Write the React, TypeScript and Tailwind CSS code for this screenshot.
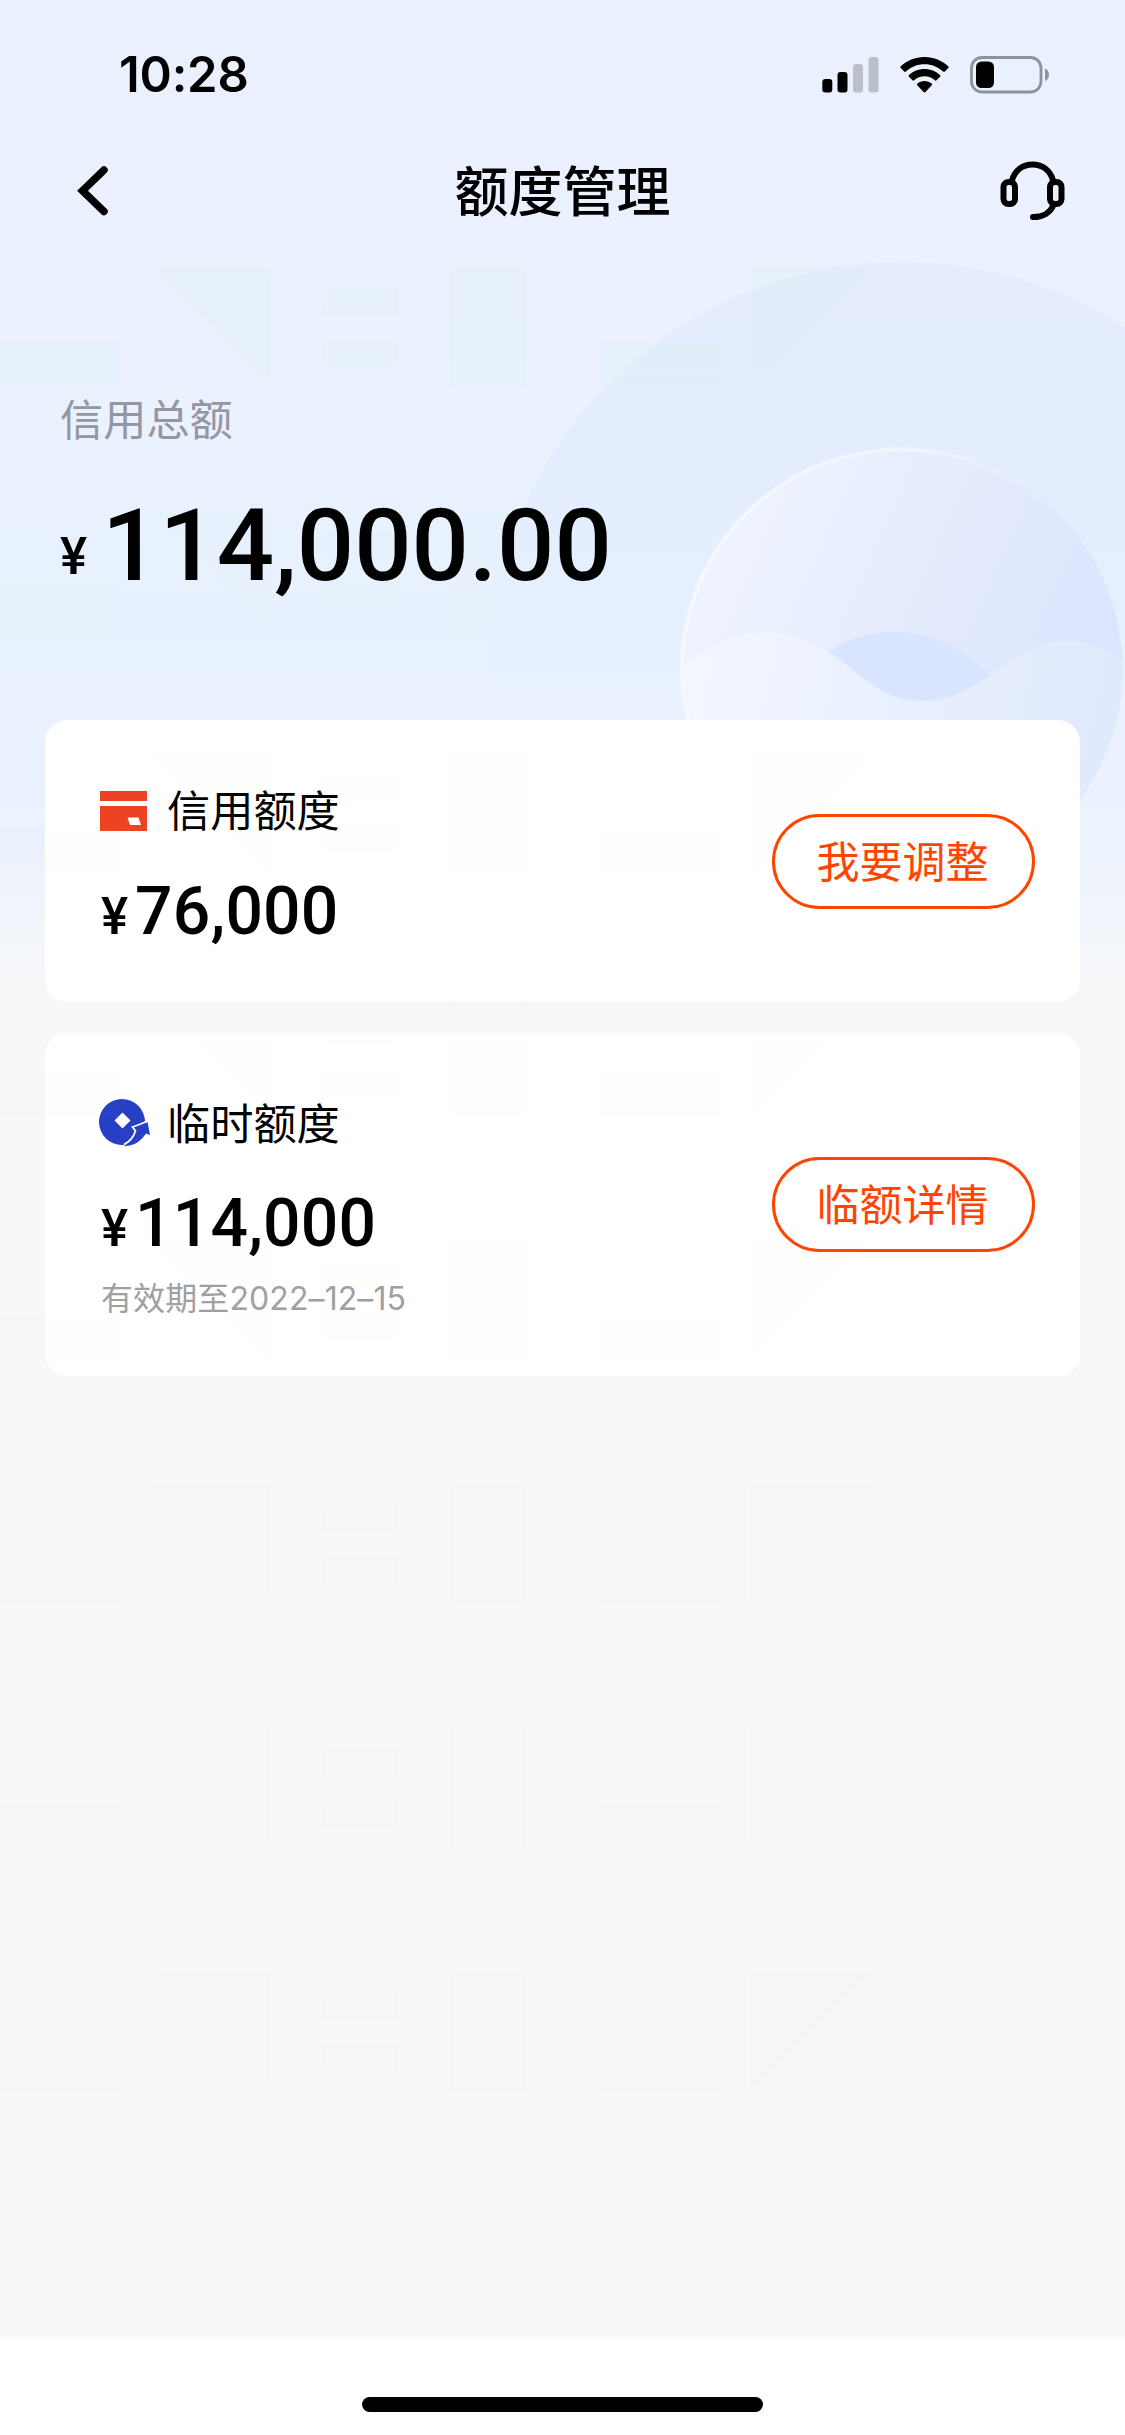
const watermarkShape =
  "M0 76H120V120H0ZM152 0H271V120ZM323 21H398V48H323ZM323 73H398V100H323ZM450 0H526V120H450ZM600 76H720V120H600ZM751 0H871L751 120Z";

const skyRows = [
  { y: 266, opacity: 0.22 },
  { y: 509.5, opacity: 0.12 },
];

const pageRows = [
  { y: 753, opacity: 0.015 },
  { y: 997, opacity: 0.015 },
  { y: 1240.5, opacity: 0.015 },
  { y: 1484, opacity: 0.022 },
  { y: 1728, opacity: 0.022 },
  { y: 1971.5, opacity: 0.022 },
];

const cjk = "font-['Noto_Sans_CJK_SC',sans-serif]";

function Backdrop() {
  return (
    <svg className="absolute inset-0" width="1125" height="1100" viewBox="0 0 1125 1100" fill="none">
      <defs>
        <linearGradient id="halo" x1="0" y1="262" x2="0" y2="720" gradientUnits="userSpaceOnUse">
          <stop offset="0" stopColor="#e4ecfd" />
          <stop offset="0.5" stopColor="#e3edfe" />
          <stop offset="0.78" stopColor="#e4effe" stopOpacity="0.5" />
          <stop offset="1" stopColor="#e8f1ff" stopOpacity="0" />
        </linearGradient>
        <linearGradient id="orb" x1="730" y1="520" x2="1115" y2="690" gradientUnits="userSpaceOnUse">
          <stop offset="0" stopColor="#eff3ff" />
          <stop offset="0.5" stopColor="#e5ebfd" />
          <stop offset="1" stopColor="#d9e5fd" />
        </linearGradient>
        <linearGradient id="rim" x1="700" y1="560" x2="1060" y2="600" gradientUnits="userSpaceOnUse">
          <stop offset="0" stopColor="#f5f8ff" />
          <stop offset="0.6" stopColor="#f1f5ff" stopOpacity="0.8" />
          <stop offset="1" stopColor="#e6eefe" stopOpacity="0" />
        </linearGradient>
        <linearGradient id="wave" x1="700" y1="650" x2="1110" y2="740" gradientUnits="userSpaceOnUse">
          <stop offset="0" stopColor="#f3f6ff" />
          <stop offset="0.5" stopColor="#e8effe" />
          <stop offset="1" stopColor="#e0eafd" />
        </linearGradient>
        <clipPath id="orbClip">
          <circle cx="901.500" cy="669" r="221" />
        </clipPath>
      </defs>
      <circle cx="902" cy="676" r="414" fill="url(#halo)" />
      {skyRows.map(({ y, opacity }) => (
        <path key={y} transform={`translate(0 ${y})`} fill="#dcf3ee" fillOpacity={opacity} d={watermarkShape} />
      ))}
      <circle cx="901.500" cy="669" r="221" fill="url(#orb)" />
      <g clipPath="url(#orbClip)">
        <path d="M820 658C845 638 870 631 897 632C935 633 965 650 992 677L960 720H840Z" fill="#d9e4fe" />
        <path
          d="M678 669C705 647 735 632 767 632C840 632 860 701 922 701C985 701 1005 641 1068 641C1092 641 1110 650 1125 663V900H678Z"
          fill="url(#wave)"
        />
      </g>
      <circle cx="901.500" cy="669" r="219.500" stroke="url(#rim)" strokeWidth="4" />
    </svg>
  );
}

function Watermark() {
  return (
    <svg
      className="pointer-events-none absolute inset-0"
      width="1125"
      height="2435"
      viewBox="0 0 1125 2435"
      fill="#b8b870"
    >
      {pageRows.map(({ y, opacity }) => (
        <path key={y} transform={`translate(0 ${y})`} fillOpacity={opacity} d={watermarkShape} />
      ))}
    </svg>
  );
}

function StatusBar() {
  return (
    <div className="flex h-[141px] items-start justify-between pt-[45px] pr-[75px] pl-[119px]">
      <span className="font-[Inter] text-[49px] leading-[60px] font-semibold tracking-[-0.2px]">10:28</span>
      <div className="flex items-start gap-[21px] pt-[11px]">
        <svg width="57" height="38" viewBox="0 0 57 38">
          <rect x="0.300" y="23" width="10" height="13.500" rx="3" />
          <rect x="15.500" y="16" width="10" height="20.500" rx="3" />
          <rect x="31" y="8" width="10" height="28.500" rx="3" fill="#bcc0cb" />
          <rect x="46.500" y="1" width="10" height="35.500" rx="3" fill="#bcc0cb" />
        </svg>
        <svg width="49" height="38" viewBox="0 0 49 38">
          <path d="M24.500 1C34 1 42.300 4.800 48.200 10.300C48.800 10.900 48.800 11.500 48.300 12L44.800 15.500C44.300 16 43.700 16 43.100 15.500C38.200 10.900 31.700 8.200 24.500 8.200S10.800 10.900 5.900 15.500C5.300 16 4.700 16 4.200 15.500L.7 12C.2 11.500 .2 10.900 .8 10.300C6.700 4.800 15 1 24.500 1Z" />
          <path d="M24.500 13C30.600 13 36 15.300 40 19C40.600 19.600 40.600 20.200 40.100 20.700L36.500 24.300C36 24.800 35.400 24.800 34.800 24.300C32 21.800 28.500 20.300 24.500 20.300S17 21.800 14.200 24.300C13.600 24.800 13 24.800 12.500 24.300L8.900 20.700C8.400 20.200 8.400 19.600 9 19C13 15.300 18.400 13 24.500 13Z" />
          <path d="M24.500 25C27.200 25 29.700 25.900 31.600 27.500C32.200 28 32.200 28.600 31.700 29.200L25.500 36C24.900 36.600 24.100 36.600 23.500 36L17.300 29.200C16.800 28.600 16.800 28 17.400 27.500C19.300 25.900 21.800 25 24.500 25Z" />
        </svg>
        <svg width="80" height="38" viewBox="0 0 80 38">
          <rect x="1.500" y="1.500" width="69.500" height="34.500" rx="10.500" fill="none" stroke="#8e939c" strokeWidth="2.800" />
          <rect x="6" y="5.500" width="18" height="26.500" rx="5.500" />
          <path d="M75 12.500C77.500 13.500 79 15.800 79 18.700S77.500 24 75 25Z" fill="#8e939c" />
        </svg>
      </div>
    </div>
  );
}

function Header() {
  return (
    <header className="grid h-[100px] grid-cols-[1fr_auto_1fr] items-center px-[60px]">
      <svg className="ml-[17px]" width="64" height="50" viewBox="0 0 64 50" fill="none" stroke="#000" strokeWidth="7.500" strokeLinecap="round">
        <path d="M27 4L5.500 24.700L27 45.500" />
      </svg>
      <h1 className={`${cjk} -mt-[5px] text-[54px] leading-[100px] font-medium`}>额度管理</h1>
      <svg className="justify-self-end" width="66" height="60" viewBox="0 0 66 60" fill="none" stroke="#000" strokeWidth="6" strokeLinecap="round">
        <path d="M13 19.500C15.500 9.500 23.500 3.500 33.500 3.500S51.500 9.500 54 19.500" />
        <rect x="4.500" y="21" width="11.500" height="22" rx="5" />
        <rect x="51" y="21" width="11.500" height="22" rx="5" />
        <path d="M54.500 44C51.500 51.500 44 56 34 56" />
      </svg>
    </header>
  );
}

function CardIcon() {
  return (
    <svg width="51" height="50" viewBox="0 0 51 50">
      <rect x="1" y="5" width="47" height="10" fill="#ee4323" />
      <rect x="1" y="20" width="47" height="25" fill="#ee4323" />
      <path d="M28.500 31.500H39.500L42 39H31Z" fill="#fff" />
    </svg>
  );
}

function CoinIcon() {
  return (
    <svg width="51" height="50" viewBox="0 0 51 50">
      <circle cx="23" cy="24" r="23" fill="#263fc4" />
      <path d="M23.500 14.500L31.500 22.500L23.500 30.500L15.500 22.500Z" fill="#fff" />
      <path
        d="M48.500 24L51 37L47 35.500C42 43 35 48.500 24.500 48C31 44.500 37.500 40.500 39.500 35L33.500 34L38 29.500Z"
        fill="#263fc4"
      />
      <path
        d="M47.500 23.500C42 26 38 27.500 33.500 29L36.500 33C34.500 39 31 43.500 25 46.500"
        fill="none"
        stroke="#fff"
        strokeWidth="1.800"
      />
    </svg>
  );
}

function Money({ value }: { value: string }) {
  return (
    <div className="flex items-baseline font-[Roboto] font-medium">
      <span className="w-[34px] text-[51px] leading-[60px]">
        <span className="inline-block origin-left">¥</span>
      </span>
      <span className="text-[66px] leading-[60px] tracking-[0.2px]">{value}</span>
    </div>
  );
}

function PillButton({ label }: { label: string }) {
  return (
    <button
      className={`${cjk} flex h-[95px] w-[263px] items-center justify-center rounded-full border-[3px] border-[#ff4400] pr-[2px] pb-[5px] text-[43px] leading-[60px] text-[#ff4400]`}
    >
      {label}
    </button>
  );
}

export default function App() {
  return (
    <div className="relative flex h-[2435px] w-[1125px] flex-col overflow-hidden bg-[linear-gradient(180deg,#ebf0ff_0px,#ebf1ff_380px,#e9f1ff_500px,#e7f1fe_620px,#eaf1ff_730px,#ecf2fe_840px,#f2f5fa_930px,#f8f8f8_1030px)] text-black">
      <Backdrop />
      <div className="relative flex flex-1 flex-col">
        <StatusBar />
        <Header />
        <section className="flex h-[479px] flex-col pl-[60px]">
          <p className={`${cjk} mt-[146px] text-[43.200px] leading-[60px] font-normal text-[#9397a1]`}>信用总额</p>
          <div className="mt-[44px] flex items-baseline font-[Roboto] font-medium">
            <span className="relative -top-[6px] w-[42px] text-[51px]">
              <span className="inline-block origin-left">¥</span>
            </span>
            <span className="text-[101px] leading-[110px]">114,000.00</span>
          </div>
        </section>
        <main className="flex flex-1 flex-col gap-[31px] px-[45px]">
          <article className="flex h-[282px] items-center justify-between rounded-[22px] bg-white pr-[45px] pl-[54px]">
            <div className="flex h-full flex-col pt-[66px]">
              <div className="flex h-[50px] items-center gap-[17px]">
                <CardIcon />
                <h2 className={`${cjk} -mt-[7px] text-[43.200px] leading-[50px]`}>信用额度</h2>
              </div>
              <div className="mt-[46px] pl-[2px]">
                <Money value="76,000" />
              </div>
            </div>
            <PillButton label="我要调整" />
          </article>
          <article className="flex h-[343px] items-center justify-between rounded-[22px] bg-white pr-[45px] pl-[54px]">
            <div className="flex h-full flex-col pt-[65px]">
              <div className="flex h-[50px] items-center gap-[17px]">
                <CoinIcon />
                <h2 className={`${cjk} -mt-[5px] text-[43.200px] leading-[50px]`}>临时额度</h2>
              </div>
              <div className="mt-[46px] pl-[2px]">
                <Money value="114,000" />
              </div>
              <p className="mt-[15px] pl-[2px] font-[Inter,'Noto_Sans_CJK_SC',sans-serif] text-[32px] leading-[50px] tracking-[0.1px] text-[#a0a0a0]">
                有效期至2022–12–15
              </p>
            </div>
            <PillButton label="临额详情" />
          </article>
        </main>
        <footer className="flex h-[98px] justify-center bg-white pt-[60px]">
          <div className="h-[15px] w-[401px] rounded-full bg-black" />
        </footer>
      </div>
      <Watermark />
    </div>
  );
}
